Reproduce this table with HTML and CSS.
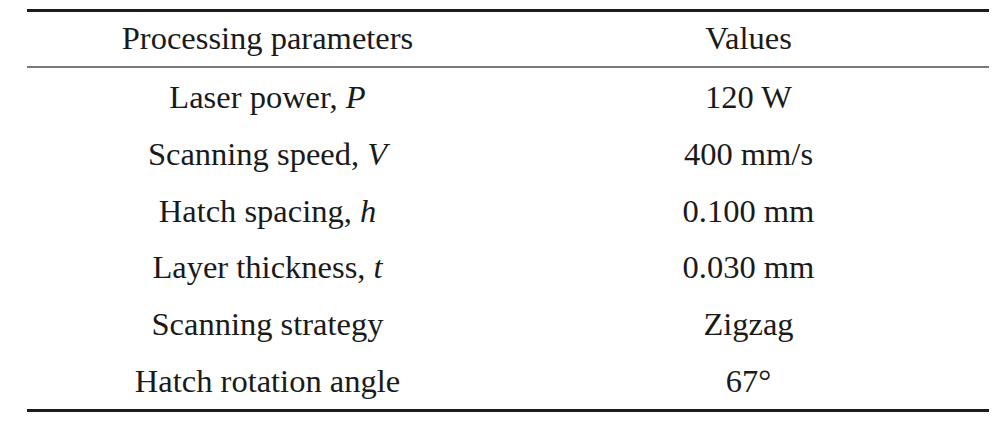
FILE: index.html
```html
<!DOCTYPE html>
<html>
<head>
<meta charset="utf-8">
<link rel="stylesheet" href="styles.css">
</head>
<body>
<table class="params">
  <thead>
    <tr><th>Processing parameters</th><th>Values</th></tr>
  </thead>
  <tbody>
    <tr><td>Laser power, <i>P</i></td><td>120 W</td></tr>
    <tr><td>Scanning speed, <i>V</i></td><td>400 mm/s</td></tr>
    <tr><td>Hatch spacing, <i>h</i></td><td>0.100 mm</td></tr>
    <tr><td>Layer thickness, <i>t</i></td><td>0.030 mm</td></tr>
    <tr><td>Scanning strategy</td><td>Zigzag</td></tr>
    <tr><td>Hatch rotation angle</td><td>67°</td></tr>
  </tbody>
</table>
</body>
</html>
```
FILE: styles.css
```css
html, body {
  margin: 0;
  padding: 0;
  background: #ffffff;
}
body {
  padding: 9px 0 0 27px;
  font-family: "Liberation Serif", "Times New Roman", serif;
  color: #1a1a1a;
}
.params {
  width: 962px;
  border-collapse: separate;
  border-spacing: 0;
  border-top: 3px solid #1c1c1c;
  border-bottom: 3px solid #1c1c1c;
  font-size: 32.5px;
}
.params th,
.params td {
  width: 50%;
  text-align: center;
  vertical-align: top;
  font-weight: normal;
  line-height: 36px;
}
.params th {
  padding: 8px 0 10px;
  border-bottom: 2px solid #7a7a7a;
}
.params td {
  padding: 11px 0 9.8px;
}
.params i {
  font-style: italic;
}
```
